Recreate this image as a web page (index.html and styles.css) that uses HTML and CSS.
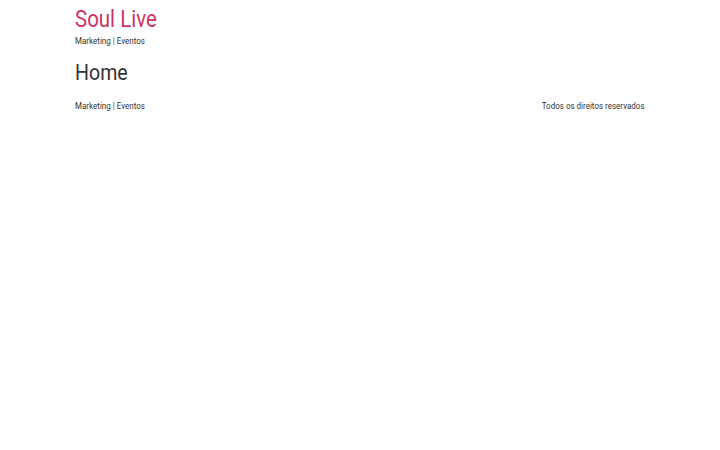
FILE: index.html
```html
<!DOCTYPE html>
<html lang="pt-BR">
<head>
<meta charset="utf-8">
<title>Soul Live</title>
<link rel="stylesheet" href="styles.css">
</head>
<body>
<header class="site-header">
  <a class="site-title" href="#"><span class="sq">Soul Live</span></a>
  <p class="site-description"><span class="sq">Marketing | Eventos</span></p>
</header>
<main class="site-main">
  <h1 class="page-title"><span class="sq">Home</span></h1>
</main>
<footer class="site-footer">
  <p class="footer-description"><span class="sq">Marketing | Eventos</span></p>
  <p class="copyright"><span class="sq sq-right">Todos os direitos reservados</span></p>
</footer>
</body>
</html>
```
FILE: styles.css
```css
html, body { margin: 0; padding: 0; background: #fff; }
body {
  font-family: Roboto, "Liberation Sans", sans-serif;
  color: #333;
  font-size: 9px;
}
.site-header, .site-main, .site-footer {
  width: 570px;
  margin: 0 auto;
}
.sq {
  display: inline-block;
  white-space: nowrap;
  transform: scaleX(0.89);
  transform-origin: left center;
}
.sq-right { transform-origin: right center; }
.site-header {
  padding-top: 7px;
}
.site-title {
  display: block;
  color: #c36;
  text-decoration: none;
  font-size: 23px;
  line-height: 26px;
}
.site-description {
  margin: 2px 0 0;
  font-size: 9px;
  line-height: 12px;
}
.page-title {
  margin: 12.5px 0 0;
  font-weight: 400;
  font-size: 22px;
  line-height: 26px;
}
.site-footer {
  display: flex;
  justify-content: space-between;
  margin-top: 14px;
}
.site-footer p { margin: 0; font-size: 9px; line-height: 12px; }
```
